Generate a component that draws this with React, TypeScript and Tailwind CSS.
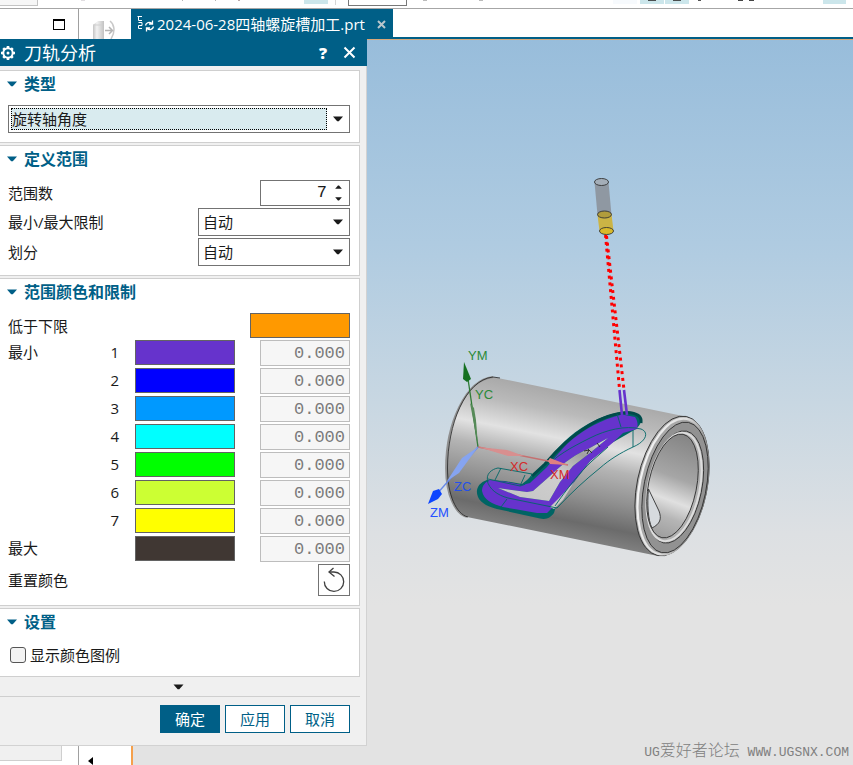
import { useState } from 'react';
import type { ReactNode } from 'react';
import clsx from 'clsx';

interface RangeRow {
  label?: string;
  index?: number;
  color: string;
}

const RANGE_ROWS: RangeRow[] = [
  { label: '最小', index: 1, color: 'bg-[#6633cc]' },
  { index: 2, color: 'bg-[#0000ff]' },
  { index: 3, color: 'bg-[#0099ff]' },
  { index: 4, color: 'bg-[#00ffff]' },
  { index: 5, color: 'bg-[#00ff00]' },
  { index: 6, color: 'bg-[#ccff33]' },
  { index: 7, color: 'bg-[#ffff00]' },
  { label: '最大', color: 'bg-[#403733]' },
];

const DownArrow = ({ className = 'h-[6px] w-[10px]' }: { className?: string }) => (
  <svg viewBox="0 0 10 6" className={clsx('shrink-0', className)} fill="currentColor">
    <path d="M0 0.5h10L5.8 5.2H4.2z" />
  </svg>
);

const GearIcon = () => (
  <svg viewBox="0 0 16 16" className="h-4 w-4" fill="none" stroke="white">
    <circle cx="8" cy="8" r="4.7" strokeWidth="2" />
    <circle cx="8" cy="8" r="1.5" fill="white" stroke="none" />
    <path
      d="M8 1v2.4M8 12.6V15M1 8h2.4M12.6 8H15M3.2 3.2l1.5 1.5M11.3 11.3l1.5 1.5M12.8 3.2l-1.5 1.5M4.7 11.3l-1.5 1.5"
      strokeWidth="2.6"
    />
  </svg>
);

const PartIcon = () => (
  <svg viewBox="0 0 26 19" className="h-[19px] w-[26px]" fill="none">
    <defs>
      <linearGradient id="tube" x1="0" x2="1">
        <stop offset="0" stopColor="#c4c4c4" />
        <stop offset="0.35" stopColor="#f2f2f2" />
        <stop offset="1" stopColor="#c2c2c2" />
      </linearGradient>
    </defs>
    <path d="M1 5L6 1h6v18H1z" fill="url(#tube)" />
    <path d="M1 5h9" stroke="#cfcfcf" />
    <path d="M18 1c4 3 6 10 1 18" stroke="#c8c8c8" strokeWidth="1.5" />
    <path d="M13 10.5h7M17 7l3.5 3.5L17 14" stroke="#b4b4b4" strokeWidth="1.5" />
  </svg>
);

const TabIcon = () => (
  <svg viewBox="0 0 18 18" className="h-[18px] w-[18px]" fill="none" stroke="white">
    <path d="M5 1.5H1.5v4H5M1.5 7.500H5v3H1.500v3H5M0.500 1.500h2" />
    <path d="M8.500 10.500c.6-3 4-4 6.500-2M15.500 5.500V9H12M16.500 11.500c-.6 3-4 4-6.500 2M9.500 16.500V13H13" strokeWidth="1.300" />
  </svg>
);

const Toolbar = () => (
  <div className="flex h-[9px] items-start border-b border-[#a6a6a6] bg-white">
    <div className="h-[6px] w-[38px] border-r border-b border-[#c3c3c3] bg-[#f6f6f6]" />
    <div className="ml-[43px] h-px w-1 bg-[#e0dde0]" />
    <div className="ml-[97px] h-px w-px bg-[#b5b5b5]" />
    <div className="ml-[32px] h-px w-px bg-[#b5b5b5]" />
    <div className="ml-[22px] h-px w-0.5 bg-[#bba9a9]" />
    <div className="ml-[64px] h-1 w-6 bg-[#cce6eb]" />
    <div className="ml-[7px] h-[5px] w-px bg-[#d6d6d6]" />
    <div className="ml-3 h-[6px] w-[59px] border border-t-0 border-[#787878]" />
    <div className="ml-4 h-px w-1 bg-[#bbb]" />
    <div className="ml-[52px] h-px w-1 bg-[#bbb]" />
    <div className="ml-[130px] h-1 w-6 bg-[#f7fafd]" />
    <div className="ml-[3px] flex h-1 w-6 justify-center bg-[#cce6eb]">
      <div className="h-px w-2 bg-[#4b4f50]" />
    </div>
    <div className="ml-px flex h-1 w-6 justify-center bg-[#cce6eb]">
      <div className="h-px w-2 bg-[#4b4f50]" />
    </div>
    <div className="ml-[9px] h-px w-[3px] bg-[#555]" />
    <div className="ml-[37px] h-px w-[5px] bg-[#444]" />
    <div className="ml-[6px] h-px w-[5px] bg-[#444]" />
    <div className="mr-[7px] ml-auto h-1 w-[23px] bg-[#cce6eb]" />
  </div>
);

const TabBar = () => (
  <div className="flex h-[30px] bg-white">
    <div className="flex w-[79px] shrink-0 items-center justify-end border-r border-[#a0a0a0] pr-[13px]">
      <button type="button" aria-label="还原窗口" className="h-[11px] w-3 border border-t-2 border-black" />
    </div>
    <div className="flex w-[52px] shrink-0 items-end justify-center">
      <PartIcon />
    </div>
    <div className="flex shrink-0 items-center bg-[#005f87] pl-[6px] text-white">
      <TabIcon />
      <span className="ml-0.5 text-[15px] leading-5 whitespace-nowrap">2024-06-28四轴螺旋槽加工.prt</span>
      <button type="button" aria-label="关闭" className="mr-[7px] ml-3">
        <svg viewBox="0 0 9 9" className="h-[9px] w-[9px]" stroke="#b9c6cc" strokeWidth="2">
          <path d="M1 1l7 7M8 1L1 8" />
        </svg>
      </button>
    </div>
    <div className="flex-1 border-b-2 border-[#005f87]" />
  </div>
);

const Section = ({ title, children }: { title: string; children: ReactNode }) => (
  <section className="mr-[6px] border border-l-0 border-[#cfcfcf] bg-white pr-[9px] pb-[9px] pl-2">
    <h2 className="flex h-[26px] items-center text-base leading-5 font-bold text-[#005f87]">
      <DownArrow className="mr-[7px] -ml-px h-[6px] w-[10px]" />
      {title}
    </h2>
    <div className="flex flex-col gap-0.5 pt-2">{children}</div>
  </section>
);

interface SelectBoxProps {
  id: string;
  value: string;
  label?: string;
  highlighted?: boolean;
}

const SelectBox = ({ id, value, label, highlighted }: SelectBoxProps) => (
  <div
    className={clsx(
      'flex h-7 items-center border border-[#737373] bg-white',
      highlighted ? 'w-full pl-0.5' : 'w-[152px] pl-1',
    )}
  >
    <select
      id={id}
      aria-label={label}
      defaultValue={value}
      className={clsx(
        'min-w-0 flex-1 appearance-none text-[15px] leading-5 outline-none',
        highlighted && 'border border-dotted border-black bg-[#d9ebef]',
      )}
    >
      <option>{value}</option>
    </select>
    <DownArrow className="mx-[6px] h-[6px] w-[10px]" />
  </div>
);

const Row = ({ label, htmlFor, children }: { label: string; htmlFor: string; children: ReactNode }) => (
  <div className="flex items-center justify-between">
    <label htmlFor={htmlFor}>{label}</label>
    {children}
  </div>
);

const ToolPathDialog = () => {
  const [count, setCount] = useState(7);
  const [showLegend, setShowLegend] = useState(false);

  return (
    <div className="border-r border-b border-[#d2d2d2] bg-[#f0f0f0] text-[15px] leading-5 text-[#1a1a1a]">
      <header className="-mr-px flex h-[27px] items-center bg-[#005f87] pr-[11px] text-white">
        <GearIcon />
        <h1 className="ml-2 text-lg leading-6">刀轨分析</h1>
        <button type="button" className="ml-auto text-base font-extrabold">?</button>
        <button type="button" aria-label="关闭" className="ml-4">
          <svg viewBox="0 0 13 13" className="h-[13px] w-[13px]" stroke="white" strokeWidth="2">
            <path d="M1.5 1.5l10 10M11.5 1.5l-10 10" />
          </svg>
        </button>
      </header>

      <div className="flex flex-col gap-0.5 pt-1">
        <Section title="类型">
          <SelectBox id="type" label="类型" value="旋转轴角度" highlighted />
        </Section>

        <Section title="定义范围">
          <Row label="范围数" htmlFor="count">
            <div className="flex h-[26px] w-[90px] items-center border border-[#737373] pr-[7px]">
              <input
                id="count"
                type="text"
                value={count}
                onChange={(e) => setCount(Number(e.target.value) || 0)}
                className="w-0 flex-1 pr-2 text-right font-['Liberation_Mono','Noto_Sans_CJK_SC',monospace] text-[17px] outline-none"
              />
              <div className="flex flex-col gap-2">
                <button type="button" aria-label="增加" onClick={() => setCount(count + 1)}>
                  <DownArrow className="block h-1 w-[7px] rotate-180" />
                </button>
                <button type="button" aria-label="减少" onClick={() => setCount(count - 1)}>
                  <DownArrow className="block h-1 w-[7px]" />
                </button>
              </div>
            </div>
          </Row>
          <Row label="最小/最大限制" htmlFor="limits">
            <SelectBox id="limits" value="自动" />
          </Row>
          <Row label="划分" htmlFor="division">
            <SelectBox id="division" value="自动" />
          </Row>
        </Section>

        <Section title="范围颜色和限制">
          <div className="flex h-[25px] items-center justify-between">
            <span>低于下限</span>
            <button type="button" aria-label="低于下限颜色" className="h-full w-[100px] border border-[#636363] bg-[#ff9900]" />
          </div>
          {RANGE_ROWS.map((row) => (
            <div key={row.color} className="flex h-[26px] items-start">
              <span className="flex-1 pt-0.5">{row.label}</span>
              <span className="mr-4 pt-0.5">{row.index}</span>
              <button
                type="button"
                aria-label={`颜色 ${row.index ?? row.label}`}
                className={clsx('mr-[25px] h-[25px] w-[100px] border border-[#636363]', row.color)}
              />
              <input
                type="text"
                disabled
                aria-label={`限制 ${row.index ?? row.label}`}
                defaultValue="0.000"
                className="h-[26px] w-[90px] border border-[#bdbdbd] bg-[#f6f6f6] pr-1 text-right font-['Liberation_Mono','Noto_Sans_CJK_SC',monospace] text-[17px] text-[#7b7b7b]"
              />
            </div>
          ))}
          <Row label="重置颜色" htmlFor="reset">
            <button id="reset" type="button" className="flex h-8 w-8 items-center justify-center border border-[#737373]">
              <svg viewBox="0 0 24 26" className="h-[26px] w-6" fill="none" stroke="#404040" strokeWidth="1.3">
                <path d="M2.300 14.500A9.700 9.700 0 1 0 12 5H7" />
                <path d="M11.500 1L7 5l5.500 4.500" />
              </svg>
            </button>
          </Row>
        </Section>

        <Section title="设置">
          <label className="flex h-6 items-center gap-1 pl-0.5">
            <input
              type="checkbox"
              checked={showLegend}
              onChange={(e) => setShowLegend(e.target.checked)}
              className="h-4 w-4 appearance-none rounded-[3px] border border-[#555] bg-[#f3f3f3] checked:bg-[#005f87]"
            />
            显示颜色图例
          </label>
        </Section>
      </div>

      <div className="flex h-5 items-center justify-center border-b border-[#cfcfcf] pr-1 mr-[6px]">
        <button type="button" aria-label="更多">
          <DownArrow className="block h-[6px] w-[11px]" />
        </button>
      </div>
      <footer className="flex justify-end gap-[5px] pt-2 pr-4 pb-3">
        <button type="button" className="h-7 w-[60px] border border-[#005f87] bg-[#005f87] text-white">确定</button>
        <button type="button" className="h-7 w-[60px] border border-[#005f87] bg-white text-[#005f87]">应用</button>
        <button type="button" className="h-7 w-[60px] border border-[#005f87] bg-white text-[#005f87]">取消</button>
      </footer>
    </div>
  );
};

const Part = () => (
  <g>
    {/* Outer body */}
    <path
      d="M493 377C465 380 446 425 446 468C446 495 455 514 467 517L658 556L700 500L683 416Z"
      fill="url(#body)"
    />
    <path d="M493 377C465 380 446 425 446 468C446 495 455 514 467 517" fill="none" stroke="#909090" strokeWidth="1.8" />
    <path d="M500 378L493 377C465 380 447.500 425 447.500 468C447.500 495 456 514 468 517" fill="none" stroke="#222" strokeWidth="0.8" />

    {/* End ring */}
    <ellipse cx="672" cy="486" rx="35" ry="71" transform="rotate(11.6 672 486)" fill="#a8a8a8" stroke="#333" strokeWidth="0.9" />
    <ellipse cx="673" cy="486.500" rx="33.300" ry="69" transform="rotate(11.6 673 486.5)" fill="none" stroke="url(#bevel)" strokeWidth="2.2" />
    <ellipse cx="675" cy="487.500" rx="31" ry="66.500" transform="rotate(11.6 675 487.5)" fill="#929292" stroke="#333" strokeWidth="0.9" />
    <ellipse cx="675" cy="487" rx="26.800" ry="57" transform="rotate(11.6 675 487)" fill="#b2b2b2" stroke="#333" strokeWidth="0.9" />
    <ellipse cx="674" cy="487" rx="25.800" ry="55" transform="rotate(11.6 674 487)" fill="none" stroke="#dedede" strokeWidth="2" />
    <ellipse cx="672.500" cy="486" rx="24" ry="52.800" transform="rotate(11.6 672.5 486)" fill="url(#hole)" stroke="#333" strokeWidth="0.9" />
    <path d="M648.500 489L659 511C662 519 660 524 652 528C648 520 647 504 648.500 489Z" fill="#d6dade" stroke="#333" strokeWidth="0.9" />

    {/* Slot wall */}
    <path
      d="M487 480C478 483 475 490 478 497C481 504 490 507 497 509L540 518.500C547 520 551 517 554 513L556 506L590 461L610 444L636 429C645 421 643 413 627 411.500C616 412 600 417 588 424C570 434 556 449 545 463L532 476L522 484L505 481Z"
      fill="#006464"
    />
    <path d="M532 476L545 464C556 451 570 437 588 426C600 418 616 413 627 412.500C637 413 642 416 641 423" fill="none" stroke="#004b4b" strokeWidth="3" />
    {/* Cutting moves */}
    <path
      fillRule="evenodd"
      d="M490 480L507 482L522 485L530 483L547 467C557 455 565 445 574 438C584 430 600 420 622 414.500L635 417C638 421 638 426 637 429L623 433C616 440 609 446 603 451L590 461L573 483L553 507L547 513L537 513L503 507C492 504 484 500 482 491C482 486 485 482 490 480ZM498 488L527 492L533 491L550 476C564 462 578 453 588 449L608 438L590 453L573 466L560 482L549 501L520 497Z"
      fill="#6633cc"
    />
    <path d="M498 488L527 492L533 491L550 476C564 462 578 453 588 449L608 438L590 453L573 466L560 482L549 501L520 497Z" fill="url(#floor)" />
    <path d="M584 451L589 450L587 454M597 443L600 447M588 449L592 453" stroke="#222" strokeWidth="0.9" fill="none" />
    <path d="M550 507L558 499L574 482L563 500L554 509Z" fill="#c8c8c8" />

    {/* Boundary curves */}
    <g fill="none" stroke="#006666" strokeWidth="0.9">
      <path d="M488 482C485 474 492 469 498 468L532 474C530 480 526 485 520 486L488 479" />
      <path d="M501 468L495 480M525 475L520 486M532 475L524 485" />
      <path d="M487 480C489 489 497 495 508 498L557 508C571 493 585 480 600 468C609 460 620 453 633 447C647 441 649 432 641 429C625 425 606 430 590 438C570 448 556 456 546 467" />
      <path d="M633 430V447M617 414L621 427M507 499L501 507" />
      <path d="M555 506C566 490 580 472 592 461L608 447" />
    </g>
  </g>
);

const Cutter = () => (
  <g>
    <path d="M594.5 182L597.5 215H611.5L608.5 182Z" fill="#8f98a2" />
    <path d="M597.5 215L599.5 231C601 235 612 235 613.5 231L611.5 214Z" fill="#cbb445" />
    <g fill="none" stroke="#333" strokeWidth="0.9">
      <ellipse cx="601.5" cy="182" rx="7" ry="3.5" fill="#a4aeb8" />
      <ellipse cx="604.5" cy="214.5" rx="7" ry="3.5" fill="#b19c3c" />
      <ellipse cx="606.5" cy="231" rx="7" ry="3.5" fill="#d8b92a" />
    </g>
    <g stroke="#ff0000" strokeWidth="3" strokeDasharray="3 3.8">
      <path d="M605.5 235L619.5 389" />
      <path d="M606.5 236L624 390" />
    </g>
    <path d="M619.5 390L622 415M624 390L627 415" stroke="#6633cc" strokeWidth="2.6" />
  </g>
);

const Axes = () => (
  <g>
    <path d="M478 447L467 372" stroke="#2d7a34" strokeWidth="1.3" />
    <path d="M478 446L470 403L474 408L476 420Z" fill="#568a58" />
    <path d="M464 362L471 379L467 382L463 379Z" fill="#157021" />
    <path d="M478 447L568 465" stroke="#c57070" strokeWidth="1.3" />
    <path d="M478 447L507 450L524 456L508 456Z" fill="#d88f8f" />
    <path d="M568 465L550 458L548 461L550 464Z" fill="#e08080" />
    <path d="M478 447L436 495" stroke="#6688e8" strokeWidth="1.3" />
    <path d="M478 447L462 458L447 481L459 473Z" fill="#86a4f0" />
    <path d="M428 504L433 491L439 489L442 494L438 499Z" fill="#0d45ff" />
    <g fontFamily="Liberation Sans, sans-serif" fontSize="13">
      <g fill="#2c8a38">
        <text x="468" y="360">YM</text>
        <text x="475" y="399">YC</text>
      </g>
      <g fill="#d42a2a">
        <text x="510" y="471">XC</text>
        <text x="550" y="479">XM</text>
      </g>
      <text x="454" y="491" fill="#2450e8">ZC</text>
      <text x="430" y="517" fill="#2450ff">ZM</text>
    </g>
  </g>
);

const Viewport = () => (
  <main className="relative min-w-0 flex-1 border-t border-[#d8a878] bg-[linear-gradient(#98bddb_0%,#afcbe1_28%,#c8d7e2_50%,#dde0e3_68%,#e3e3e3_78%)]">
    <svg viewBox="367 40 486 725" className="block w-full">
      <defs>
        <linearGradient id="body" gradientUnits="userSpaceOnUse" x1="590" y1="396" x2="562" y2="537">
          <stop offset="0" stopColor="#a9a9a9" />
          <stop offset="0.15" stopColor="#bababa" />
          <stop offset="0.33" stopColor="#e2e2e2" />
          <stop offset="0.48" stopColor="#b4b4b4" />
          <stop offset="0.7" stopColor="#8f8f8f" />
          <stop offset="0.88" stopColor="#6b6b6b" />
          <stop offset="1" stopColor="#808080" />
        </linearGradient>
        <linearGradient id="bevel" x1="0" y1="0" x2="1" y2="0">
          <stop offset="0" stopColor="#f2f2f2" />
          <stop offset="0.5" stopColor="#dedede" />
          <stop offset="0.8" stopColor="#9a9a9a" />
          <stop offset="1" stopColor="#7d7d7d" />
        </linearGradient>
        <linearGradient id="hole" gradientUnits="userSpaceOnUse" x1="680" y1="435" x2="664" y2="540">
          <stop offset="0" stopColor="#858585" />
          <stop offset="0.4" stopColor="#a6a6a6" />
          <stop offset="0.62" stopColor="#e0e0e0" />
          <stop offset="0.78" stopColor="#b5b5b5" />
          <stop offset="1" stopColor="#9b9b9b" />
        </linearGradient>
        <linearGradient id="floor" x1="0" y1="1" x2="1" y2="0">
          <stop offset="0" stopColor="#c4c4c4" />
          <stop offset="0.5" stopColor="#cfcfcf" />
          <stop offset="0.75" stopColor="#a0a0a0" />
          <stop offset="1" stopColor="#e2e2e2" />
        </linearGradient>
      </defs>
      <Part />
      <Cutter />
      <Axes />
    </svg>
    <p className="absolute right-1 bottom-0 font-['Liberation_Mono','Noto_Sans_CJK_SC',monospace] text-[13px] leading-6 whitespace-nowrap text-[#808080]">
      UG<span className="text-base leading-6 font-light">爱好者论坛</span> WWW.UGSNX.COM
    </p>
  </main>
);

const App = () => (
  <div className="flex min-h-screen flex-col overflow-hidden bg-[#e3e3e3] font-['Open_Sans','Noto_Sans_CJK_SC',sans-serif]">
    <Toolbar />
    <TabBar />
    <div className="flex flex-1">
      <div className="flex w-[367px] shrink-0 flex-col">
        <ToolPathDialog />
        <div className="flex min-h-[19px] flex-1">
          <div className="w-[79px] border-r border-[#a0a0a0] bg-white">
            <div className="h-[15px] w-[62px] border-r border-b border-[#cfcfcf] bg-[#f0f0f0]" />
          </div>
          <div className="flex w-[54px] items-end border-r-2 border-[#f5a04c] bg-white pl-[9px]">
            <svg viewBox="0 0 5 8" className="h-2 w-[5px]">
              <path d="M5 0v8L0 4z" />
            </svg>
          </div>
        </div>
      </div>
      <Viewport />
    </div>
  </div>
);

export default App;
